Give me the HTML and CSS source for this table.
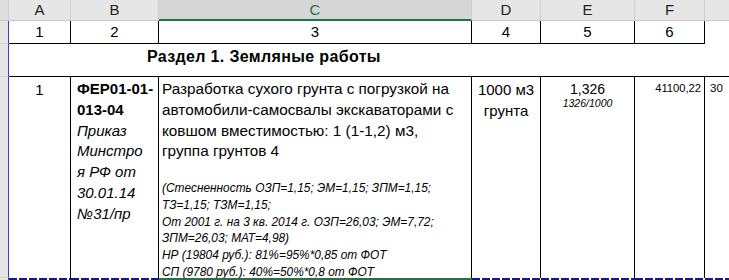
FILE: index.html
```html
<!DOCTYPE html>
<html lang="ru">
<head>
<meta charset="utf-8">
<title>Смета</title>
<link rel="stylesheet" href="styles.css">
</head>
<body>
<div class="sheet">
  <div class="hd corner"></div>
  <div class="hd">A</div>
  <div class="hd">B</div>
  <div class="hd sel">C</div>
  <div class="hd">D</div>
  <div class="hd">E</div>
  <div class="hd">F</div>
  <div class="hd last"></div>

  <div class="rh"></div>
  <div class="c num">1</div>
  <div class="c num">2</div>
  <div class="c num">3</div>
  <div class="c num">4</div>
  <div class="c num">5</div>
  <div class="c num">6</div>
  <div class="c open"></div>

  <div class="rh"></div>
  <div class="c section">Раздел 1. Земляные работы</div>
  <div class="c gfill"></div>

  <div class="rh"></div>
  <div class="c pos">1</div>
  <div class="c code"><b>ФЕР01-01-</b><b>013-04</b><i>Приказ</i><i>Минстро</i><i>я РФ от</i><i>30.01.14</i><i>№31/пр</i></div>
  <div class="c name">
    <p class="main">Разработка сухого грунта с погрузкой на автомобили-самосвалы экскаваторами с ковшом вместимостью: 1 (1-1,2) м3, группа грунтов 4</p>
    <p class="note">(Стесненность ОЗП=1,15; ЭМ=1,15; ЗПМ=1,15;<br>ТЗ=1,15; ТЗМ=1,15;<br>От 2001 г. на 3 кв. 2014 г. ОЗП=26,03; ЭМ=7,72;<br>ЗПМ=26,03; МАТ=4,98)<br>НР (19804 руб.): 81%=95%*0,85 от ФОТ<br>СП (9780 руб.): 40%=50%*0,8 от ФОТ</p>
  </div>
  <div class="c unit">1000 м3 грунта</div>
  <div class="c qty"><span class="q">1,326</span><span class="frac">1326/1000</span></div>
  <div class="c price">41100,22</div>
  <div class="c gcut">30</div>

  <div class="brk-rh"></div>
  <div class="brk"></div>
  <div class="brk"></div>
  <div class="brk green"></div>
  <div class="brk"></div>
  <div class="brk"></div>
  <div class="brk"></div>
  <div class="brk"></div>
</div>
</body>
</html>
```

FILE: styles.css
```css
html, body {
  margin: 0;
  padding: 0;
  background: #ffffff;
  overflow: hidden;
}
body {
  font-family: "Liberation Sans", Arial, sans-serif;
  color: #000;
}
.sheet {
  display: grid;
  grid-template-columns: 9px 62px 88px 313px 69px 94px 70px 40px;
  grid-template-rows: 21px 23px 33px 201px 2px;
  width: 745px;
}
.sheet > div {
  box-sizing: border-box;
  overflow: hidden;
}
.hd {
  background: #e6e6e6;
  border-right: 1px solid #cfcfcf;
  border-bottom: 1px solid #c8c8c8;
  font-size: 15px;
  line-height: 20px;
  text-align: center;
  color: #222;
}
.hd.corner {
  background: #dedede;
  border-right: 1px solid #cfcfcf;
}
.hd.sel {
  background: #d6d6d6;
  color: #217346;
  border-bottom: 2px solid #217346;
  line-height: 19px;
}
.hd.last { border-right: 0; }
.rh {
  background: #e6e6e6;
  border-right: 1px solid #3b3bc4;
  border-bottom: 1px solid #d0d0d0;
}
.c {
  border-right: 1px solid #000;
  border-bottom: 1px solid #000;
  background: #fff;
}
.num {
  font-size: 15px;
  line-height: 22px;
  text-align: center;
}
.open { border-right: 0; border-bottom: 0; }
.section {
  grid-column: span 6;
  border-right: 0;
  font-weight: bold;
  font-size: 16px;
  letter-spacing: 0.35px;
  line-height: 18px;
  padding: 4px 0 0 138px;
  white-space: nowrap;
}
.gfill { border-right: 0; }
.pos {
  font-size: 15px;
  line-height: 20px;
  text-align: center;
  padding-top: 3px;
}
.code {
  font-size: 15px;
  line-height: 20.8px;
  padding: 2px 2px 0 6px;
  white-space: nowrap;
}
.code b, .code i { display: block; }
.code.c, .name.c, .unit.c, .qty.c, .price.c, .gcut.c, .pos.c { border-bottom: 0; }
.name {
  padding: 2px 12px 0 3px;
}
.name p { margin: 0; }
.main {
  font-size: 15.3px;
  line-height: 20.8px;
}
.note {
  margin-top: 18px !important;
  font-style: italic;
  font-size: 11.9px;
  line-height: 16.7px;
  white-space: nowrap;
}
.unit {
  font-size: 15px;
  line-height: 21px;
  text-align: center;
  padding-top: 2px;
}
.qty {
  text-align: center;
  padding-top: 4px;
}
.qty .q { display: block; font-size: 14px; line-height: 16px; }
.qty .frac { display: block; font-style: italic; font-size: 10.5px; line-height: 12px; }
.price {
  font-size: 11.2px;
  line-height: 16px;
  text-align: right;
  padding: 3px 3px 0 0;
}
.gcut {
  border-right: 0;
  font-size: 11.5px;
  line-height: 16px;
  padding: 3px 0 0 5px;
}
.brk-rh { background: #e6e6e6; border-right: 1px solid #3b3bc4; }
.brk {
  background: repeating-linear-gradient(90deg, #16168a 0 8px, #ffffff 8px 10px);
}
.brk.green { background: #217346; }
```
